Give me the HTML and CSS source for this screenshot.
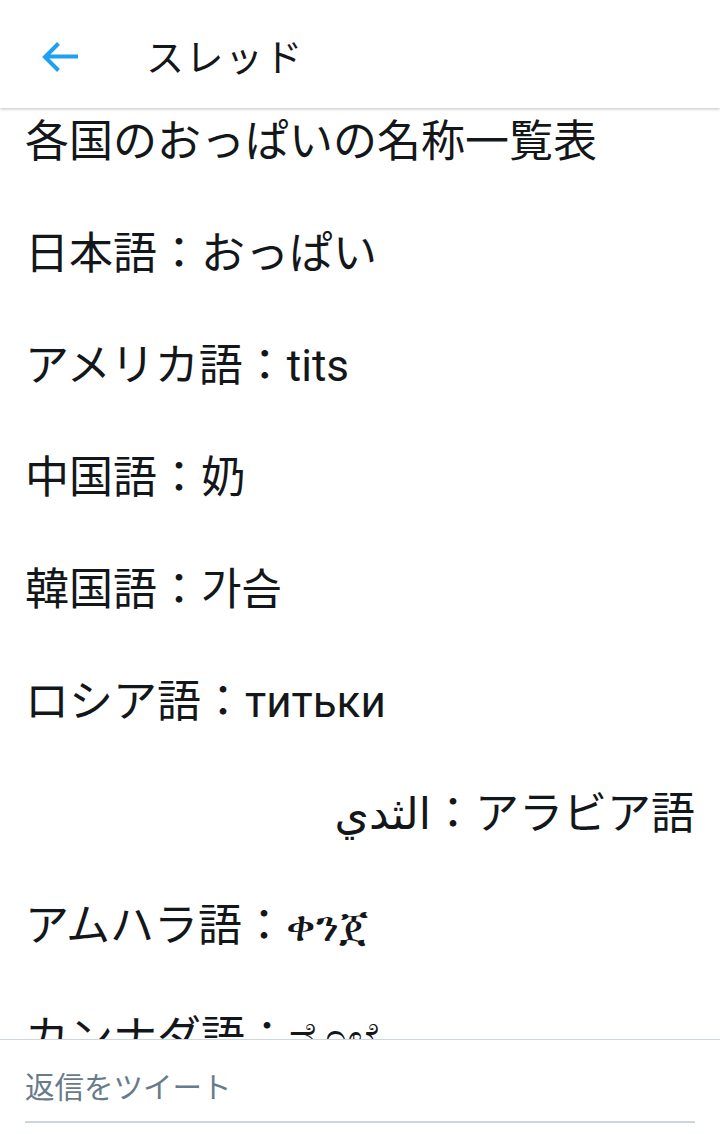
FILE: index.html
```html
<!DOCTYPE html>
<html lang="ja">
<head>
<meta charset="utf-8">
<link rel="stylesheet" href="styles.css">
</head>
<body>
<div class="app">
  <header class="topbar">
    <svg class="back" viewBox="0 0 40 40" width="40" height="40" aria-hidden="true">
      <path d="M38 18.5H6.5M18.5 5.5L5 19l13.5 13.5" fill="none" stroke="#1da1f2" stroke-width="4" stroke-linecap="butt" stroke-linejoin="miter"/>
    </svg>
    <h1 class="title">スレッド</h1>
  </header>
  <main class="thread">
    <div class="line">各国のおっぱいの名称一覧表</div>
    <div class="line">日本語：おっぱい</div>
    <div class="line">アメリカ語：tits</div>
    <div class="line">中国語：奶</div>
    <div class="line">韓国語：가슴</div>
    <div class="line">ロシア語：титьки</div>
    <div class="line rtl" dir="rtl">アラビア語：الثدي</div>
    <div class="line">アムハラ語：ቀንጀ</div>
    <div class="line">カンナダ語：ಮೊಲೆ</div>
  </main>
  <footer class="reply">
    <div class="reply-input">返信をツイート</div>
  </footer>
</div>
</body>
</html>
```
FILE: styles.css
```css
html, body {
  margin: 0;
  padding: 0;
  background: #ffffff;
}
body {
  font-family: Roboto, "Noto Sans CJK JP", "DejaVu Sans", sans-serif;
  color: #14171a;
}
.app {
  width: 720px;
  height: 1134px;
  display: flex;
  flex-direction: column;
  overflow: hidden;
}
.topbar {
  height: 108px;
  flex: 0 0 108px;
  display: flex;
  align-items: center;
  padding-left: 40px;
  box-sizing: border-box;
  box-shadow: 0 1px 3px rgba(0, 0, 0, 0.25);
  position: relative;
  z-index: 2;
  background: #fff;
}
.back {
  display: block;
  margin-top: 8px;
}
.title {
  margin: 0 0 0 66px;
  font-size: 38px;
  font-weight: 400;
  color: #14171a;
  letter-spacing: 1.5px;
}
.thread {
  flex: 1 1 auto;
  overflow: hidden;
  display: flex;
  flex-direction: column;
  gap: 56px;
  padding: 6px 25px 0 25px;
  font-size: 44px;
  line-height: 56px;
}
.line {
  white-space: nowrap;
}
.rtl {
  text-align: right;
}
.reply {
  flex: 0 0 95px;
  border-top: 1px solid #ccd6dd;
  box-sizing: border-box;
  padding: 0 25px;
  background: #fff;
}
.reply-input {
  margin-top: 28px;
  font-size: 29.5px;
  line-height: 40px;
  color: #687b8a;
  padding-bottom: 13px;
  border-bottom: 2px solid #ccd6dd;
}
```
